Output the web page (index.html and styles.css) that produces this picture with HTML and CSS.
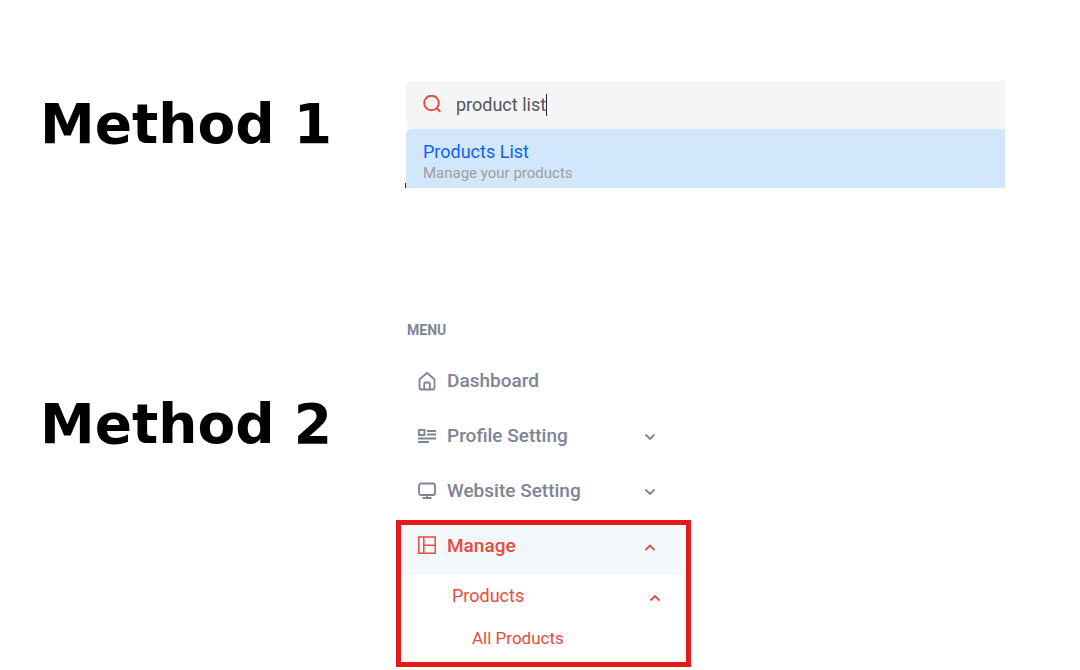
FILE: index.html
```
<!DOCTYPE html>
<html lang="en">
<head>
    <meta charset="UTF-8">
    <meta name="viewport" content="width=device-width, initial-scale=1.0">
    <title>Products List</title>
    <link rel="stylesheet" href="styles.css">
</head>
<body>
    <section class="method">
        <h1 class="method-title">Method 1</h1>
        <div class="search">
            <label class="search-bar">
                <svg class="search-icon" width="20" height="20" viewBox="0 0 20 20" aria-hidden="true">
                    <circle cx="9.5" cy="8" r="7.3"/>
                    <path d="M14.7 13.2L18.3 16.8"/>
                </svg>
                <span class="field">
                    <input type="text" class="search-input" value="product list" aria-label="Search">
                    <span class="caret"></span>
                </span>
            </label>
            <a href="#" class="search-result">
                <span class="result-title">Products List</span>
                <span class="result-text">Manage your products</span>
            </a>
        </div>
    </section>

    <section class="method method-menu">
        <h1 class="method-title">Method 2</h1>
        <nav class="menu">
            <h2 class="menu-label">MENU</h2>
            <a href="#" class="menu-item">
                <svg class="icon" width="20" height="20" viewBox="0 0 20 20" aria-hidden="true">
                    <path d="M2.5 8.2L10 2L17.5 8.2V16.5Q17.5 18.5 15.5 18.5H4.5Q2.5 18.5 2.5 16.5Z"/>
                    <path d="M7.2 18.5V13Q7.2 11.5 8.7 11.5H11.3Q12.8 11.5 12.8 13V18.5"/>
                </svg>
                Dashboard
            </a>
            <button type="button" class="menu-item">
                <svg class="icon" width="20" height="20" viewBox="0 0 20 20" aria-hidden="true">
                    <path d="M2 4H7.5V9H2ZM10 5H19M10 8.5H19M1 12.5H19M1 16H12"/>
                </svg>
                Profile Setting
                <svg class="arrow" width="12" height="12" viewBox="0 0 12 12" aria-hidden="true"><path d="M1.5 4.5L6 9L10.5 4.5"/></svg>
            </button>
            <button type="button" class="menu-item">
                <svg class="icon" width="20" height="20" viewBox="0 0 20 20" aria-hidden="true">
                    <rect x="2" y="2.5" width="16" height="11.5" rx="2"/>
                    <path d="M10 14V17M5.5 17H14.5"/>
                </svg>
                Website Setting
                <svg class="arrow" width="12" height="12" viewBox="0 0 12 12" aria-hidden="true"><path d="M1.5 4.5L6 9L10.5 4.5"/></svg>
            </button>
            <div class="menu-open">
                <button type="button" class="menu-item active">
                    <svg class="icon icon-thin" width="20" height="20" viewBox="0 0 20 20" aria-hidden="true">
                        <path d="M1.8 1H18.2V17.2H1.8ZM6.8 1V17.2M6.8 9.2H18.2"/>
                    </svg>
                    Manage
                    <svg class="arrow" width="12" height="12" viewBox="0 0 12 12" aria-hidden="true"><path d="M1.5 10L6 5.5L10.5 10"/></svg>
                </button>
                <button type="button" class="menu-sub">
                    Products
                    <svg class="arrow" width="12" height="12" viewBox="0 0 12 12" aria-hidden="true"><path d="M1.5 10.5L6 6L10.5 10.5"/></svg>
                </button>
                <a href="#" class="menu-link">All Products</a>
            </div>
        </nav>
    </section>
</body>
</html>
```
FILE: styles.css
```
:root {
    --accent-color: #e84c3d;
    --menu-color: #7f8495;
    --frame-color: #e61919;
}

* {
    box-sizing: border-box;
}

body {
    margin: 0;
    padding: 81px 75px 0 40px;
    background-color: #fff;
    font-family: Roboto, sans-serif;
}

a {
    text-decoration: none;
}

button {
    background: none;
    border: none;
    cursor: pointer;
    font-family: inherit;
    text-align: left;
}

.method {
    display: grid;
    grid-template-columns: 356px 1fr;
    align-items: start;
}

.method-menu {
    margin-top: 132px;
}

.method-title {
    margin: 0;
    padding-top: 11px;
    font: bold 55px/64px "DejaVu Sans", sans-serif;
    color: #000;
}

.method-menu .method-title {
    padding-top: 72px;
}

/* search */
.search {
    margin-left: 10px;
}

.search-bar {
    display: flex;
    align-items: center;
    gap: 14px;
    height: 48px;
    padding: 0 16px;
    background-color: #f5f5f5;
    border-radius: 5px 0 0 5px;
}

.search-icon {
    fill: none;
    stroke: var(--accent-color);
    stroke-width: 2;
}

.field {
    display: flex;
    align-items: center;
}

.search-input {
    field-sizing: content;
    padding: 0;
    border: none;
    outline: none;
    background: none;
    font: 18px/24px Roboto, sans-serif;
    color: #50575e;
}

.caret {
    width: 1px;
    height: 22px;
    background-color: #222b35;
}

.search-result {
    position: relative;
    display: flex;
    flex-direction: column;
    padding: 12px 17px 5px;
    background-color: #d3e7fc;
    border-radius: 5px 0 0 0;
}

.search-result::before {
    content: "";
    position: absolute;
    left: -1px;
    bottom: 0;
    width: 1px;
    height: 5px;
    background-color: #222b35;
}

.result-title {
    font-size: 18px;
    line-height: 22px;
    color: #0d63f0;
}

.result-text {
    font-size: 15px;
    line-height: 20px;
    color: #9c9ea1;
}

/* side menu */
.menu {
    max-width: 295px;
}

.menu-label {
    margin: 0 0 14px;
    padding-left: 11px;
    font-size: 14px;
    font-weight: 700;
    line-height: 20px;
    color: var(--menu-color);
}

.menu-item {
    display: flex;
    align-items: center;
    gap: 10px;
    width: 100%;
    margin-bottom: 1px;
    padding: 0 35px 0 21px;
    font-size: 19px;
    font-weight: 500;
    line-height: 54px;
    color: var(--menu-color);
}

.icon,
.arrow {
    fill: none;
    stroke: currentColor;
    stroke-width: 1.8;
}

.icon-thin {
    stroke-width: 1.5;
}

.arrow {
    margin-left: auto;
}

.menu-open {
    margin-top: 2px;
    padding-bottom: 3px;
    border: 5px solid var(--frame-color);
    color: var(--accent-color);
}

.menu-item.active {
    width: auto;
    min-width: calc(100% - 4px);
    margin: 0 4px 0 0;
    padding: 3px 26px 11px 16px;
    background-color: #f3f8fb;
    border-radius: 0 4px 4px 0;
    line-height: 36px;
    color: inherit;
}

.menu-sub {
    display: flex;
    align-items: center;
    width: 100%;
    padding: 0 25px 0 51px;
    font-size: 18px;
    line-height: 42px;
    color: inherit;
}

.menu-link {
    display: block;
    padding-left: 71px;
    font-size: 17px;
    line-height: 42px;
    color: inherit;
}
```
